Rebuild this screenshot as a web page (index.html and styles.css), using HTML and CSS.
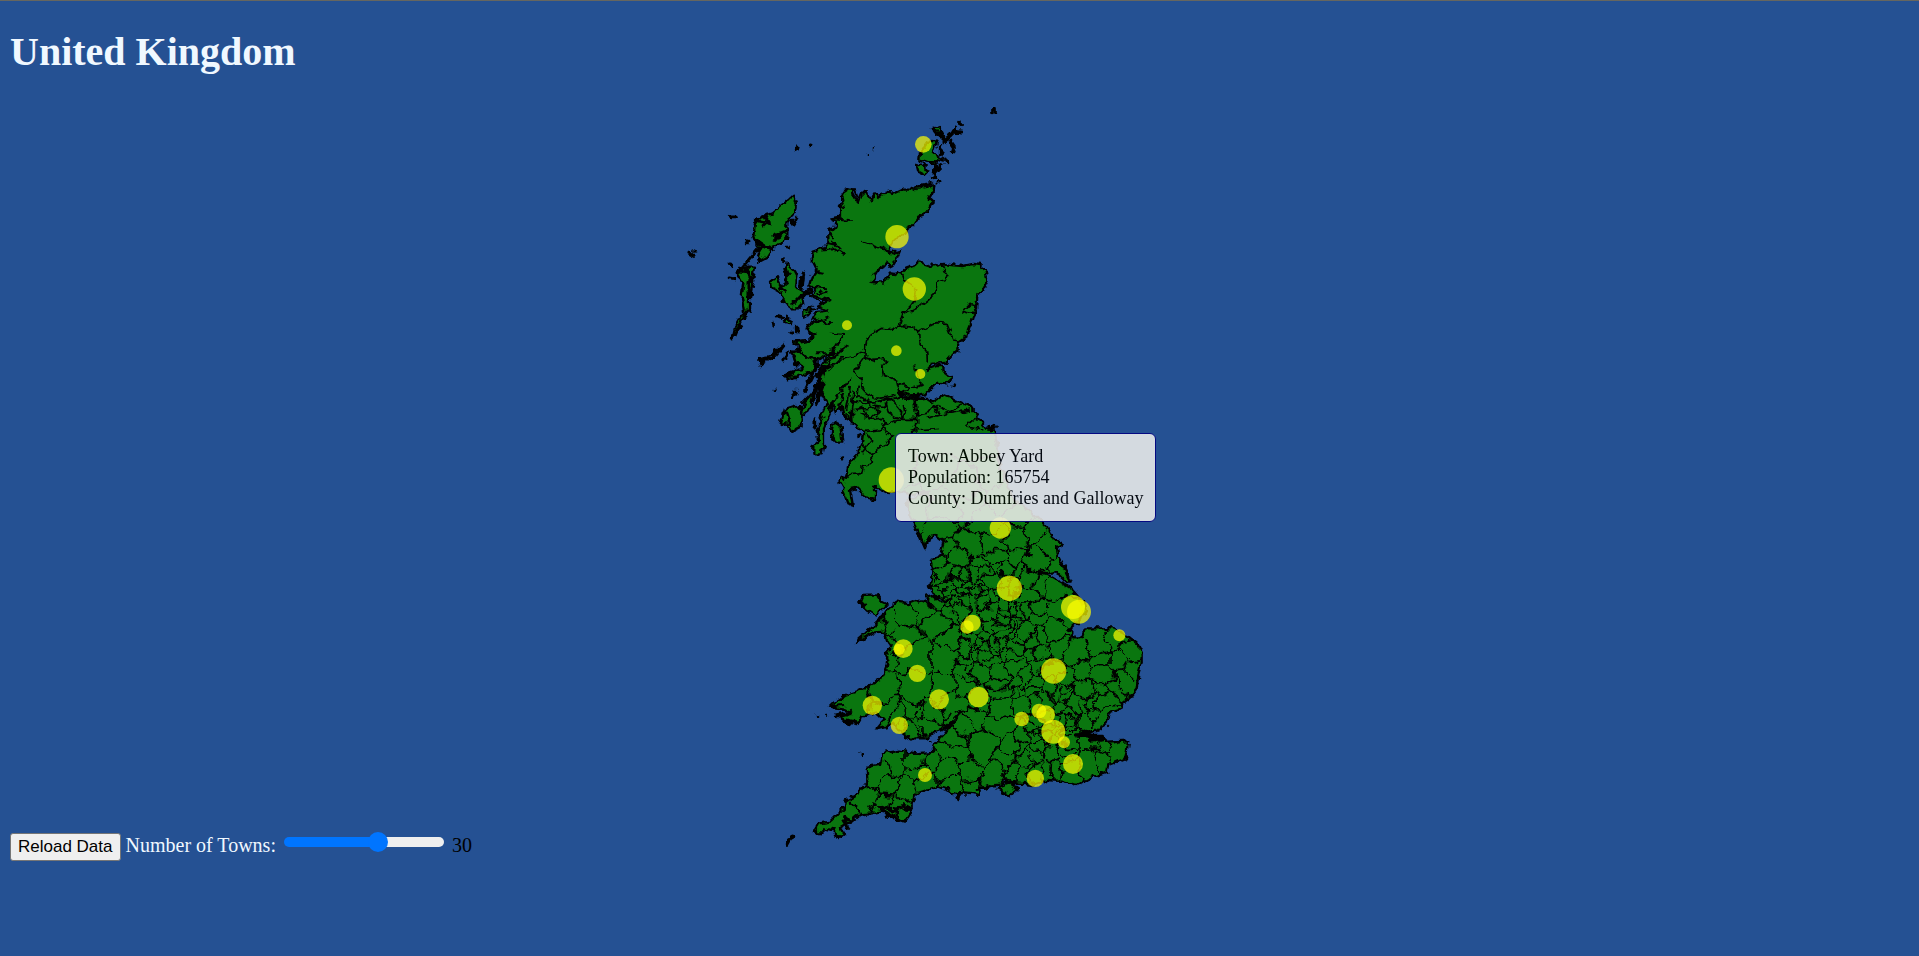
FILE: index.html
```html
<!DOCTYPE html>
<html lang="en">
<head>
<meta charset="utf-8">
<title>United Kingdom</title>
<link rel="stylesheet" href="styles.css">
</head>
<body>
<h1 class="title">United Kingdom</h1>
<div class="map">
<svg class="map-svg" viewBox="-1980 0 5697 2220" role="img" aria-label="Map of towns in the United Kingdom">
<defs>
<filter id="rough" filterUnits="userSpaceOnUse" x="0" y="0" width="1460" height="2300" color-interpolation-filters="sRGB">
<feTurbulence type="fractalNoise" baseFrequency="0.05" numOctaves="2" seed="4" result="n"/>
<feDisplacementMap in="SourceGraphic" in2="n" scale="22" xChannelSelector="R" yChannelSelector="G"/>
</filter>
<filter id="warp" filterUnits="userSpaceOnUse" x="0" y="0" width="1460" height="2300" color-interpolation-filters="sRGB">
<feTurbulence type="fractalNoise" baseFrequency="0.024" numOctaves="1" seed="9" result="n"/>
<feDisplacementMap in="SourceGraphic" in2="n" scale="60" xChannelSelector="R" yChannelSelector="G"/>
</filter>
<clipPath id="landclip"><use href="#mainland"/></clipPath>
</defs>
<g filter="url(#rough)">
<path id="mainland" class="land" d="M530 293L548 298 550 312 562 335 575 305 590 308 602 335 612 308 625 318 640 312 655 302 670 312 690 303 705 296 720 296 735 300 745 288 765 292 790 288 788 305 778 325 788 335 778 355 765 372 745 380 730 405 712 415 700 428 690 440 672 452 662 470 650 485 665 490 690 482 680 505 668 525 658 530 650 518 640 532 625 540 605 575 640 578 660 550 678 552 695 545 710 535 730 528 745 517 760 520 790 530 820 522 850 526 880 528 910 522 932 525 945 540 953 575 940 600 922 615 918 655 912 670 905 695 897 715 893 735 867 753 862 780 845 798 828 818 805 820 785 822 768 840 800 828 818 828 822 845 848 865 830 880 800 878 785 895 768 913 740 918 710 920 690 908 700 925 735 930 770 926 785 936 810 920 825 913 840 920 860 932 880 942 905 950 918 970 925 990 940 1000 955 1018 972 1022 982 1060 985 1110 1010 1180 1040 1240 1080 1260 1115 1295 1135 1315 1145 1340 1175 1360 1160 1370 1165 1400 1185 1440 1202 1475 1190 1475 1170 1455 1155 1447 1110 1450 1145 1460 1180 1480 1210 1500 1235 1530 1245 1560 1220 1600 1198 1620 1215 1645 1235 1645 1245 1615 1290 1615 1330 1615 1370 1635 1400 1660 1415 1690 1415 1720 1405 1755 1400 1795 1380 1820 1355 1840 1350 1860 1320 1868 1310 1900 1280 1922 1220 1935 1295 1935 1315 1955 1375 1952 1370 1985 1365 2005 1315 2025 1310 2048 1260 2065 1218 2085 1180 2073 1130 2070 1090 2085 1045 2080 1015 2078 1005 2065 990 2083 960 2088 930 2095 928 2115 885 2110 867 2115 865 2130 860 2112 835 2100 805 2088 770 2100 735 2112 725 2140 725 2165 705 2195 680 2185 655 2170 630 2165 600 2170 565 2175 535 2200 510 2215 522 2232 505 2245 492 2222 465 2215 450 2230 435 2222 448 2200 480 2195 525 2150 530 2128 565 2110 592 2075 590 2030 630 2025 635 1990 690 1982 740 1990 790 1985 795 1960 820 1935 850 1895 870 1870 845 1895 820 1918 785 1930 770 1948 730 1948 705 1935 685 1920 670 1902 620 1915 640 1890 615 1868 575 1880 570 1898 535 1900 510 1882 495 1878 545 1865 480 1850 495 1835 525 1815 570 1800 630 1770 650 1735 655 1710 648 1690 665 1672 648 1650 640 1625 605 1628 570 1650 558 1662 565 1645 595 1620 630 1590 650 1560 680 1535 720 1540 750 1528 790 1550 765 1522 785 1515 810 1535 845 1532 800 1522 780 1490 790 1450 785 1410 810 1400 820 1355 795 1335 775 1345 765 1375 750 1340 735 1305 715 1270 710 1240 740 1220 780 1205 720 1212 690 1205 660 1212 635 1200 615 1190 615 1230 590 1225 560 1195 540 1200 548 1245 535 1240 522 1205 505 1175 515 1158 525 1170 530 1150 535 1125 558 1095 575 1060 580 1025 548 1000 546 960 550 935 540 990 525 985 518 950 505 955 495 970 485 935 480 970 462 1010 462 1060 455 1090 430 1090 430 1070 445 1055 440 1020 455 980 470 940 455 910 445 890 440 860 455 825 500 768 450 810 400 800 390 775 370 755 415 750 430 735 410 720 430 690 435 670 470 665 440 650 475 630 420 615 435 600 418 585 425 560 440 540 425 510 428 485 460 475 475 455 475 420 495 415 500 395 480 385 510 380 510 350 520 325 515 315Z"/>
<g id="districts" clip-path="url(#landclip)"></g>
<g class="land">
<path d="M367 320L378 340 375 365 352 400 352 440 330 465 310 470 290 500 262 515 270 490 250 440 255 400 275 380 305 370 330 350Z"/>
<path d="M200 545L235 530 255 530 250 570 240 620 240 665 222 665 215 620 220 580Z"/>
<path d="M235 668L215 690 200 725 185 745 192 715 210 680Z"/>
<path d="M350 520L372 540 382 560 378 590 395 610 400 640 385 655 365 655 345 640 330 605 303 590 300 575 320 560 335 590 352 575 345 545Z"/>
<path d="M365 782L390 780 410 800 440 815 435 845 400 855 350 868 342 855 400 835 372 812Z"/>
<path d="M342 765L315 798 275 825 268 807 300 802Z"/>
<path d="M345 955L375 945 395 960 395 1010 365 1025 350 1000 332 1005 338 980Z"/>
<path d="M440 895L425 940 405 975 395 970 400 940Z"/>
<path d="M495 995L515 1010 520 1055 495 1055 482 1035 485 1005Z"/>
<path d="M345 680L365 690 362 705 345 695Z"/>
<path d="M400 660L425 650 415 675 400 685Z"/>
<path d="M580 1515L620 1513 635 1535 650 1542 618 1577 592 1560 570 1540Z"/>
<path d="M980 2095L1020 2080 1044 2095 1020 2118Z"/>
<path d="M750 190L775 155 800 158 790 190 820 205 800 218 770 215 748 208Z"/>
<path d="M740 225L755 220 775 245 765 255 745 245Z"/>
<path d="M785 115L810 105 805 135 795 130Z"/>
</g>
<g class="islets">
<path d="M972 58V68M870 98V106M380 172V176M421 166H425M182 379H197M55 490L68 498M72 480V483M232 454H236M178 523H182M178 565L192 568M350 473H356M342 510V514M345 535L352 560M400 550L395 600M375 395L380 385M365 398H372M312 698V702M380 712V720M366 730H370M322 680L335 684M378 905L368 925M433 990V1010M850 885V886M567 1038V1040M515 1103H517"/>
<path d="M812 125L818 140 828 150 842 138 855 125 875 128M840 155L852 172 848 185M812 170V190M828 208L832 220M800 225L795 262M815 225L800 240M785 262H792M802 278H806M820 148V158M850 118L858 130M790 112L800 130 812 140M755 286L780 282M960 1010L965 1020 975 1010"/>
<path d="M285 375L295 395 280 410M260 390L300 400M310 440L345 425M315 450L330 430M255 450L285 470 310 475M270 470L245 500 215 535M205 545L240 548M230 540L245 570M235 570V620M205 710L195 735M320 780L338 765M275 815L310 800M345 860L370 852M370 800L380 830M355 790L340 812M350 970L360 1000M385 950L395 965M405 900L440 830M425 930L460 840M440 940L460 880M455 880L440 930M470 830L440 860M330 590L345 600M370 640L390 620M400 620L420 600"/>
<path d="M358 2248L350 2262M358 2248L368 2242M574 1990V1996M1220 1935L1290 1940M1240 1925L1280 1950M1260 1950L1300 1945M630 2150L650 2175M640 2150L670 2165 690 2150M655 2175L690 2190M700 2145L725 2160M520 2190L535 2215M525 2180L540 2195M505 1880L545 1870M515 1892L560 1900M570 1535L580 1545"/>
</g>
<g class="inlets">
<path d="M596 192V193M608 177V178M317 898V900M443 1878H445M468 1877H472M778 1953H782M510 320L520 345M512 350L525 355M490 385L540 390M480 430L492 445M475 460L500 465M440 480L490 475 522 495M490 455L510 475M435 545L460 548M425 590L470 595M440 610L470 605M420 620L455 635M410 665L440 655M430 690L480 700M430 700L475 682M415 725L440 730M380 760L420 752M485 728L520 732 500 765M495 800L530 765M455 825L520 775M475 845L520 800M470 830L500 790M440 790L490 790M582 455L620 470 660 485M575 310V325M555 300L565 330M605 320L612 308M645 312L660 305M600 575L625 580"/>
<path d="M542 865L500 920 490 940M520 910L505 960M540 890L530 960M550 900L545 940M470 935L485 960M505 940L515 960M530 975L545 1000M700 925L775 923M690 905L720 912M480 1850L520 1845M485 1855L530 1860M1010 2068L1025 2080M1020 2070L1035 2078M990 2085L1010 2075M920 2100L960 2085M655 930L690 920M670 2150L715 2160"/>
</g>
<g class="borders">
<path d="M695 545L703 570 725 585 740 600 732 635 700 672 688 706M820 522L825 545 835 560 800 575 798 610 775 630 750 650 705 672M688 706L660 718 635 715 600 735 590 755 585 780 555 798 530 805 495 825 450 835M688 706L730 712 745 725 778 705 800 698 830 700 840 725 850 750 867 753M745 725L750 760 770 785 772 815M585 780L585 800 610 808 640 805 650 815 635 830 640 855 680 875 690 905M585 800L560 835 552 845 575 865 572 890 590 910 620 925 650 922 680 915M880 660L900 640 918 645M880 665L890 670 915 675M735 830L745 855 757 885 720 895M680 885L700 880 715 895 695 905"/>
<path d="M550 935L580 940 620 935 660 925M565 890L560 920 590 930M575 950L600 990 632 985 650 995 630 1020 580 1025M610 945L640 950 655 930M650 940L655 970 680 985 692 985 695 965 660 925M700 945L705 970 695 985M735 930L740 975 740 1005 735 1020 720 1025M740 975L770 970 790 945 810 975 770 985M790 945L840 965 875 945M632 1000L650 1030 668 1035 650 1065 620 1080 605 1095 575 1060M590 1030L605 1050 575 1090M605 1095L610 1120 580 1130 575 1150 530 1155M735 1020L810 1015M680 985L740 985M810 975L870 965 900 960M915 985L885 1010 940 1020"/>
<path d="M550 960L600 950 630 965 600 985 570 970M640 1005L690 990M590 920L600 950M620 945V985"/>
</g>
</g>
<g id="towns" class="towns"></g>
</svg>
<div class="tooltip" role="tooltip">Town: Abbey Yard<br>Population: 165754<br>County: Dumfries and Galloway</div>
</div>
<div class="controls">
<button class="reload" type="button">Reload Data</button>
<label class="label" for="towns-range">Number of Towns:</label>
<input class="range" id="towns-range" type="range" min="0" max="50" value="30">
<output class="count" for="towns-range">30</output>
</div>
<script src="map.js"></script>
</body>
</html>
```

FILE: styles.css
```css
body {
  margin: 0;
  padding: 0 10px;
  border-top: 1px solid #66665f;
  background: #255193;
  font-family: "Liberation Serif", "Times New Roman", serif;
  font-size: 20px;
  color: #000;
}

.title {
  margin: 28px 0 15px;
  font-size: 40px;
  line-height: 46px;
  color: aliceblue;
}

.map {
  position: relative;
}

.map-svg {
  display: block;
  width: 100%;
  height: auto;
  overflow: visible;
}

.land {
  fill: #0a760f;
  stroke: #000;
  stroke-width: 7;
  stroke-linejoin: round;
}

.borders,
.districts {
  fill: none;
  stroke: #000;
  stroke-width: 5;
  stroke-linejoin: round;
}

.districts {
  filter: url(#warp);
}

.islets,
.inlets {
  fill: none;
  stroke: #000;
  stroke-width: 11;
  stroke-linecap: round;
  stroke-linejoin: round;
}

.inlets {
  stroke-width: 6;
}

.towns {
  fill: #ff0;
}

.towns circle {
  opacity: 0.7;
}

.tooltip {
  position: absolute;
  left: 46.6%;
  top: 46.3%;
  padding: 12px;
  border: 1px solid navy;
  border-radius: 6px;
  background: #ededeb;
  opacity: 0.88;
  font-size: 18px;
  line-height: 21px;
  white-space: nowrap;
}

.controls {
  padding: 2px 0 16px;
}

.reload {
  padding: 1px 7px;
  border: 1px solid #767676;
  border-radius: 3px;
  background: #efefef;
  font: 17px/24px "Liberation Sans", Arial, sans-serif;
  color: #000;
}

.label {
  color: aliceblue;
}

.range {
  appearance: none;
  width: 160px;
  height: 20px;
  margin: 0 3px;
  background: none;
}

.range::-webkit-slider-runnable-track {
  height: 10px;
  border-radius: 5px;
  background: linear-gradient(to right, #0075ff 60%, #efefef 60%);
}

.range::-webkit-slider-thumb {
  appearance: none;
  width: 20px;
  height: 20px;
  margin-top: -5px;
  border-radius: 50%;
  background: #0075ff;
}
```

FILE: map.js
```javascript
const NS = "http://www.w3.org/2000/svg";

// Town markers: x, y, radius
const towns = [
  [760,163,25],[681,440,35],[733,597,35],[531,706,15],[679,782,16],[751,852,15],
  [664,1170,38],[991,1314,32],[1018,1495,38],[1209,1551,36],[1227,1565,36],
  [907,1599,25],[891,1611,20],[700,1676,28],[687,1678,17],[1348,1636,18],
  [742,1750,26],[1151,1743,38],[807,1828,30],[925,1821,31],[607,1846,29],
  [688,1906,26],[1055,1887,22],[1107,1863,22],[1127,1874,28],[1150,1925,36],
  [1182,1957,18],[1209,2022,30],[1096,2065,26],[765,2055,21]
];

// District centres
const sites = [
  [600,1150],[680,1120],[800,1130],[880,1180],[960,1150],[1000,1220],[830,1250],[900,1250],[1050,1280],
  [740,1260],[820,1320],[900,1365],[980,1360],[940,1300],[1040,1350],[1090,1325],[1135,1350],
  [870,1400],[1100,1415],[1180,1440],[1040,1400],[930,1430],[980,1410],[805,1420],[830,1380],
  [1070,1470],[1110,1480],[1160,1490],[1110,1540],[1175,1560],[1100,1590],[1060,1560],[1150,1620],
  [940,1530],[960,1570],[880,1560],[840,1560],[910,1600],[965,1610],[800,1590],[760,1560],
  [700,1570],[660,1590],[610,1610],[690,1640],[725,1700],[655,1665],
  [835,1700],[855,1655],[640,1810],[560,1835],[740,1790],[820,1800],[880,1790],
  [650,1850],[850,1840],[925,1830],[905,1880],[995,1850],[985,1800],[1040,1800],
  [1110,1650],[1160,1680],[1110,1690],[1230,1690],[1280,1660],[1340,1650],[1380,1680],
  [1290,1710],[1350,1710],[1390,1735],[1240,1740],[1300,1760],[1360,1770],[1190,1760],[1150,1740],
  [1180,1800],[935,1970],[880,1900],[850,1950],[840,1990],[1000,1910],[1030,1960],
  [1015,2010],[1040,2030],[830,2030],[895,2050],[850,2075],[900,2090],[970,2060],[780,2020],
  [740,2010],[670,2010],[630,2060],[655,2090],[580,2120],[705,2105],[690,2150],[650,2150],
  [750,2050],[760,2080],[520,2180],[1060,2030],[1100,2035],[1130,2030]
];

// Metropolitan areas and shires: x, y, width, height, spacing
const areas = [
  [800,1450,150,90,27],[965,1445,100,80,38],[1000,1545,50,100,24],[892,1660,60,80,22],
  [970,1650,140,130,40],[1050,1800,120,70,40],[1105,1895,90,60,21],[1200,1800,150,110,38],
  [1210,1950,150,80,42],[700,1880,90,50,26],[1060,1930,50,80,34],[1150,1990,60,60,36]
];

let state = 7;
function rand() {
  state = (state * 16807) % 2147483647;
  return state / 2147483647;
}
for (const [x, y, w, h, step] of areas) {
  for (let j = y; j <= y + h; j += step) {
    for (let i = x; i <= x + w; i += step) {
      sites.push([i + (rand() - 0.5) * step, j + (rand() - 0.5) * step]);
    }
  }
}

// Keep the part of the polygon that lies nearer to a than to b
function clip(poly, a, b) {
  const nx = b[0] - a[0], ny = b[1] - a[1];
  const c = (nx * (a[0] + b[0]) + ny * (a[1] + b[1])) / 2;
  const out = [];
  poly.forEach((p, i) => {
    const q = poly[(i + 1) % poly.length];
    const dp = p[0] * nx + p[1] * ny - c;
    const dq = q[0] * nx + q[1] * ny - c;
    if (dp <= 0) out.push(p);
    if (dp * dq < 0) {
      const t = dp / (dp - dq);
      out.push([p[0] + t * (q[0] - p[0]), p[1] + t * (q[1] - p[1])]);
    }
  });
  return out;
}

let d = "";
sites.forEach((a, i) => {
  if (i < 2) return;
  let poly = [[400, 1100], [1450, 1100], [1450, 2280], [400, 2280]];
  sites.forEach((b, j) => { if (j !== i) poly = clip(poly, a, b); });
  if (poly.length) d += "M" + poly.map(p => p.map(Math.round).join(" ")).join("L") + "Z";
});
const mesh = document.createElementNS(NS, "path");
mesh.setAttribute("class", "districts");
mesh.setAttribute("d", d);
document.getElementById("districts").append(mesh);

for (const [x, y, r] of towns) {
  const dot = document.createElementNS(NS, "circle");
  dot.setAttribute("cx", x);
  dot.setAttribute("cy", y);
  dot.setAttribute("r", r);
  document.getElementById("towns").append(dot);
}
```
